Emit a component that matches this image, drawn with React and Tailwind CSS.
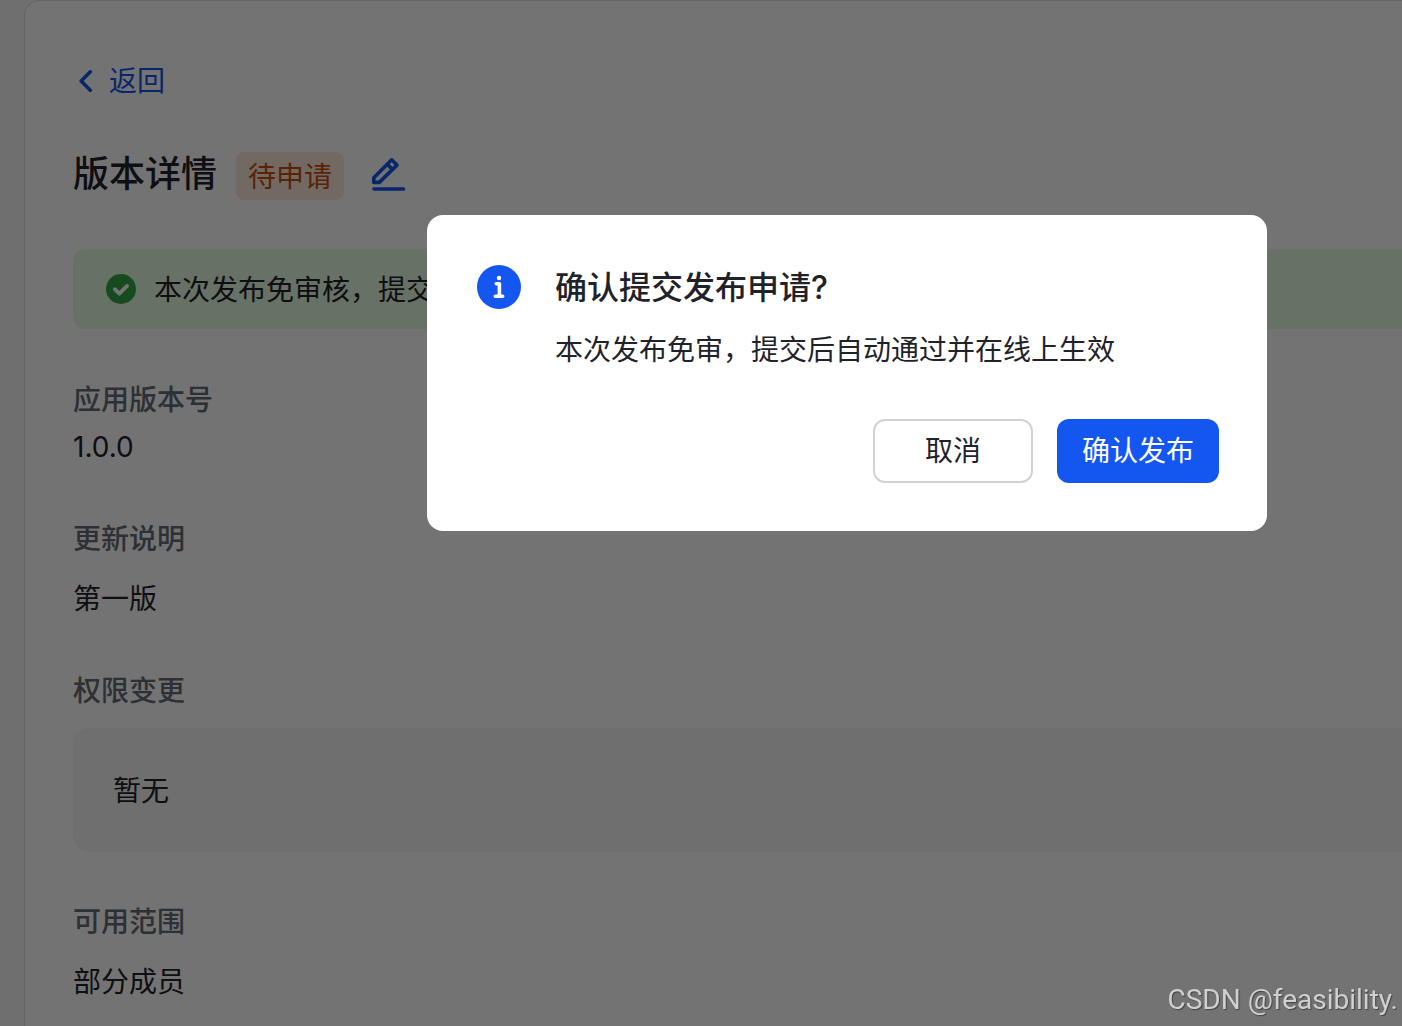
function BackIcon() {
  return (
    <svg viewBox="0 0 14 24" className="h-6 w-3.5" fill="none" stroke="currentColor" strokeWidth="3.600" strokeLinecap="round" strokeLinejoin="round" aria-hidden="true">
      <path d="M11.300 2.800 2.200 12l9.100 9.200" />
    </svg>
  );
}

function EditIcon() {
  return (
    <svg viewBox="0 0 36 36" className="size-9" fill="none" stroke="currentColor" strokeWidth="3.600" strokeLinecap="round" strokeLinejoin="round" aria-hidden="true">
      <path d="M3.800 26.400v-4.700L21.700 3.800l5.300 5.300L9.300 26.400z" />
      <path d="m17.300 8.200 5.200 5.200" strokeLinecap="butt" />
      <path d="M4 33h29.500" />
    </svg>
  );
}

function SuccessIcon() {
  return (
    <svg viewBox="0 0 30 30" className="size-[30px] shrink-0" aria-hidden="true">
      <circle cx="15" cy="15" r="15" fill="#32a645" />
      <path d="m8.800 15.200 4.500 4.500 7.800-7.800" fill="none" stroke="#fff" strokeWidth="3.800" strokeLinecap="round" strokeLinejoin="round" />
    </svg>
  );
}

function InfoIcon() {
  return (
    <svg viewBox="0 0 44 44" className="size-11 shrink-0" aria-hidden="true">
      <circle cx="22" cy="22" r="22" fill="#1456f0" />
      <circle cx="22" cy="13" r="2.200" fill="#fff" />
      <path d="M19.300 18.800h3.100v12.400M18.300 31.200h7.400" fill="none" stroke="#fff" strokeWidth="3.600" strokeLinecap="round" strokeLinejoin="round" />
    </svg>
  );
}

function Label({ children }) {
  return <dt className="mt-12 font-medium text-[#646a73]">{children}</dt>;
}

export default function App() {
  return (
    <div className="min-h-screen overflow-hidden bg-[#f5f6f7] pl-6 font-['Inter','Noto_Sans_CJK_SC',sans-serif] text-[28px] leading-[44px] text-[#1f2329]">
      <main className="min-h-screen rounded-tl-2xl border-t border-l border-[#dee0e3] bg-white pt-[58px] pb-5 pl-12">
        <a href="#versions" className="flex w-fit items-center gap-4 pl-1.5 text-[#1456f0]">
          <BackIcon />
          返回
        </a>

        <header className="mt-[49px] flex h-12 items-center">
          <h1 className="-mt-1 text-[36px] font-medium">版本详情</h1>
          <span className="ml-[19px] flex h-12 items-center rounded-lg bg-[#ffe9dc] px-3 pt-0.5 text-[#c4500c]">待申请</span>
          <button type="button" aria-label="编辑" className="-mt-1 ml-[26px] text-[#1456f0]">
            <EditIcon />
          </button>
        </header>

        <div role="status" className="mt-[49px] flex h-20 items-center gap-[18px] overflow-hidden rounded-l-xl bg-[#e6fbe3] pl-[33px] whitespace-nowrap">
          <SuccessIcon />
          <span className="pt-0.5">本次发布免审核，提交后自动通过</span>
        </div>

        <dl className="pt-px">
          <Label>应用版本号</Label>
          <dd className="mt-[3px]">1.0.0</dd>
          <Label>更新说明</Label>
          <dd className="mt-4">第一版</dd>
          <Label>权限变更</Label>
          <dd className="mt-[15px] rounded-l-2xl bg-[#f5f6f7] pt-[41px] pb-[39px] pl-10">暂无</dd>
          <Label>可用范围</Label>
          <dd className="mt-4">部分成员</dd>
        </dl>
      </main>

      <div className="fixed inset-0 flex items-start justify-center bg-black/55 pt-[215px] pl-[292px]">
        <section role="dialog" aria-modal="true" aria-labelledby="dialog-title" className="w-[840px] rounded-2xl bg-white pt-[50px] pr-12 pb-12 pl-[50px]">
          <div className="flex gap-[34px]">
            <InfoIcon />
            <div className="pt-px">
              <h2 id="dialog-title" className="text-[32px] font-medium">确认提交发布申请?</h2>
              <p className="mt-[18px]">本次发布免审，提交后自动通过并在线上生效</p>
            </div>
          </div>
          <div className="mt-[47px] flex justify-end gap-6">
            <button type="button" className="h-16 w-40 rounded-xl border-2 border-[#d0d3d6]">取消</button>
            <button type="button" className="h-16 w-[162px] rounded-xl bg-[#1456f0] text-white">确认发布</button>
          </div>
        </section>
      </div>

      <p className="fixed right-1 bottom-1 font-[Roboto,sans-serif] text-[28px] text-[#d0d0d0] [text-shadow:1px_1px_1px_#444]">CSDN @feasibility.</p>
    </div>
  );
}
